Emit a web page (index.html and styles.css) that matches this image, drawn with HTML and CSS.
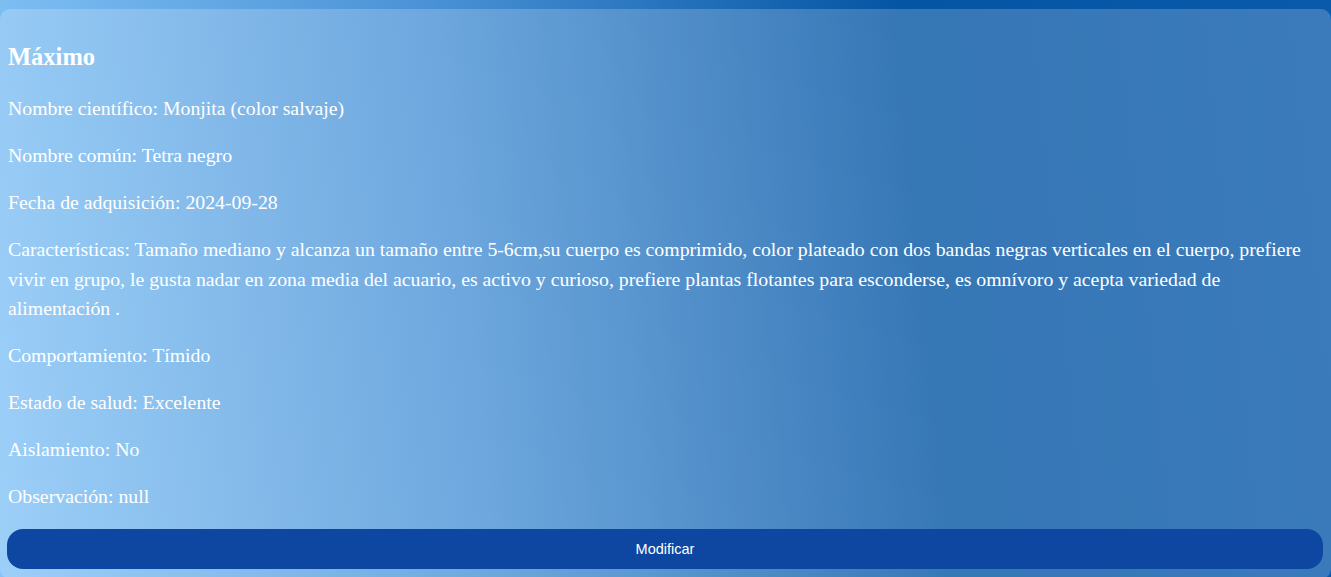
FILE: index.html
```html
<!DOCTYPE html>
<html lang="es">
<head>
<meta charset="utf-8">
<title>Máximo</title>
<link rel="stylesheet" href="styles.css">
</head>
<body>
<main class="page">
  <section class="card">
    <h3 class="card-title">Máximo</h3>
    <p class="field">Nombre científico: Monjita (color salvaje)</p>
    <p class="field">Nombre común: Tetra negro</p>
    <p class="field">Fecha de adquisición: 2024-09-28</p>
    <p class="field">Características: Tamaño mediano y alcanza un tamaño entre 5-6cm,su cuerpo es comprimido, color plateado con dos bandas negras verticales en el cuerpo, prefiere vivir en grupo, le gusta nadar en zona media del acuario, es activo y curioso, prefiere plantas flotantes para esconderse, es omnívoro y acepta variedad de alimentación .</p>
    <p class="field">Comportamiento: Tímido</p>
    <p class="field">Estado de salud: Excelente</p>
    <p class="field">Aislamiento: No</p>
    <p class="field">Observación: null</p>
    <button class="btn-modify" type="button">Modificar</button>
  </section>
</main>
</body>
</html>
```

FILE: styles.css
```css
html, body {
  margin: 0;
  padding: 0;
}

body {
  min-height: 100vh;
  background: linear-gradient(84deg, #84c4f7 0%, #4a92d6 35%, #0455a4 69%, #0a5aab 100%);
  font-family: "Liberation Serif", "Times New Roman", serif;
  color: #ffffff;
}

.page {
  padding-top: 9px;
}

.card {
  background: rgba(255, 255, 255, 0.2);
  border-radius: 10px;
  padding: 10px 8px 10px 7px;
}

.card-title {
  font-size: 24.5px;
  font-weight: bold;
  line-height: 35px;
  margin: 20px 0 20px 1px;
}

.field {
  font-size: 19.8px;
  line-height: 29.5px;
  margin: 17.5px 0 17.5px 1px;
}

.btn-modify {
  display: block;
  width: 100%;
  margin: 1px 0 0;
  padding: 12px 0;
  border: none;
  border-radius: 16px;
  background: #0d47a1;
  color: #ffffff;
  font-family: "Liberation Sans", Arial, sans-serif;
  font-size: 14.5px;
  line-height: 16px;
  cursor: pointer;
}
```
